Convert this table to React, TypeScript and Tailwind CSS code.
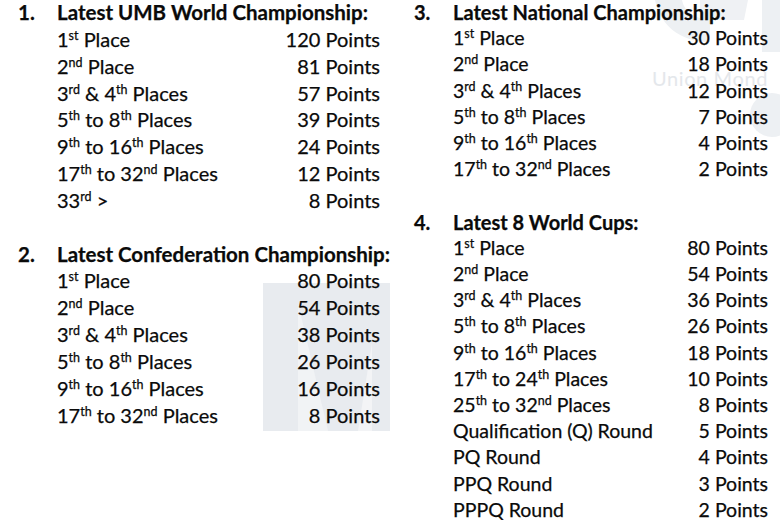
import React from "react";

type RowT = [React.ReactNode, string];

const S = ({ children }: { children: React.ReactNode }) => (
  <sup className="text-[12.5px] top-[-7px]">{children}</sup>
);

const sec1: RowT[] = [
  [<>1<S>st</S> Place</>, "120 Points"],
  [<>2<S>nd</S> Place</>, "81 Points"],
  [<>3<S>rd</S> &amp; 4<S>th</S> Places</>, "57 Points"],
  [<>5<S>th</S> to 8<S>th</S> Places</>, "39 Points"],
  [<>9<S>th</S> to 16<S>th</S> Places</>, "24 Points"],
  [<>17<S>th</S> to 32<S>nd</S> Places</>, "12 Points"],
  [<>33<S>rd</S> &gt;</>, "8 Points"],
];

const sec2: RowT[] = [
  [<>1<S>st</S> Place</>, "80 Points"],
  [<>2<S>nd</S> Place</>, "54 Points"],
  [<>3<S>rd</S> &amp; 4<S>th</S> Places</>, "38 Points"],
  [<>5<S>th</S> to 8<S>th</S> Places</>, "26 Points"],
  [<>9<S>th</S> to 16<S>th</S> Places</>, "16 Points"],
  [<>17<S>th</S> to 32<S>nd</S> Places</>, "8 Points"],
];

const sec3: RowT[] = [
  [<>1<S>st</S> Place</>, "30 Points"],
  [<>2<S>nd</S> Place</>, "18 Points"],
  [<>3<S>rd</S> &amp; 4<S>th</S> Places</>, "12 Points"],
  [<>5<S>th</S> to 8<S>th</S> Places</>, "7 Points"],
  [<>9<S>th</S> to 16<S>th</S> Places</>, "4 Points"],
  [<>17<S>th</S> to 32<S>nd</S> Places</>, "2 Points"],
];

const sec4: RowT[] = [
  [<>1<S>st</S> Place</>, "80 Points"],
  [<>2<S>nd</S> Place</>, "54 Points"],
  [<>3<S>rd</S> &amp; 4<S>th</S> Places</>, "36 Points"],
  [<>5<S>th</S> to 8<S>th</S> Places</>, "26 Points"],
  [<>9<S>th</S> to 16<S>th</S> Places</>, "18 Points"],
  [<>17<S>th</S> to 24<S>th</S> Places</>, "10 Points"],
  [<>25<S>th</S> to 32<S>nd</S> Places</>, "8 Points"],
  [<>Qualification (Q) Round</>, "5 Points"],
  [<>PQ Round</>, "4 Points"],
  [<>PPQ Round</>, "3 Points"],
  [<>PPPQ Round</>, "2 Points"],
];

function Section({
  num,
  title,
  rows,
  listW,
  titleSize,
}: {
  num: string;
  title: string;
  rows: RowT[];
  listW: string;
  titleSize: string;
}) {
  return (
    <div className="flex">
      <div className={`w-[39px] font-bold ${titleSize}`}>{num}</div>
      <div className={listW}>
        <div className={`font-bold whitespace-nowrap ${titleSize}`}>{title}</div>
        {rows.map((r, i) => (
          <div key={i} className="flex justify-between whitespace-nowrap">
            <span>{r[0]}</span>
            <span>{r[1]}</span>
          </div>
        ))}
      </div>
    </div>
  );
}

export default function App() {
  return (
    <div className="relative w-[780px] h-[520px] overflow-hidden bg-white text-[#0a0a0a] font-['Lato',sans-serif] [-webkit-text-stroke:0.25px_#0a0a0a]">
      {/* watermark left */}
      <svg
        className="absolute left-[263px] top-[283px]"
        width="127"
        height="148"
        viewBox="0 0 127 148"
      >
        <rect x="0" y="0" width="127" height="148" fill="#e8ebef" />
        <polygon points="35,20 35,148 65,148" fill="#f1f3f5" />
        <polygon points="95,148 109,148 109,60" fill="#f3f4f6" />
      </svg>
      {/* watermark top right */}
      <svg
        className="absolute left-[640px] top-0"
        width="140"
        height="140"
        viewBox="0 0 140 140"
      >
        <path
          d="M15 0 C20 25 40 42 70 42 L70 20 C52 18 44 10 42 0 Z"
          fill="#edf0f3"
        />
        <path d="M60 0 L108 0 L104 20 L60 20 Z" fill="#eff1f4" />
        <rect x="122" y="0" width="18" height="52" fill="#edf0f3" />
        <circle cx="132" cy="115" r="22" fill="#edf0f3" />
        <text
          x="12"
          y="86"
          fontSize="20"
          letterSpacing="0.6"
          fill="#e4e7eb"
          fontFamily="Lato, sans-serif"
          style={{ WebkitTextStroke: "0" }}
        >
          Union Mond
        </text>
      </svg>

      <div className="relative flex">
        <div className="w-[400px] pl-[18px] -mt-px text-[20px] leading-[26.85px]">
          <Section
            num="1."
            title="Latest UMB World Championship:"
            rows={sec1}
            listW="w-[323px]"
            titleSize="text-[20.5px]"
          />
          <div className="h-[26.85px]" />
          <Section
            num="2."
            title="Latest Confederation Championship:"
            rows={sec2}
            listW="w-[323px]"
            titleSize="text-[20.5px]"
          />
        </div>
        <div className="pl-[14px] -mt-px text-[19.5px] leading-[26.2px]">
          <Section
            num="3."
            title="Latest National Championship:"
            rows={sec3}
            listW="w-[315px]"
            titleSize="text-[20px]"
          />
          <div className="h-[26.2px]" />
          <Section
            num="4."
            title="Latest 8 World Cups:"
            rows={sec4}
            listW="w-[315px]"
            titleSize="text-[20px]"
          />
        </div>
      </div>
    </div>
  );
}
